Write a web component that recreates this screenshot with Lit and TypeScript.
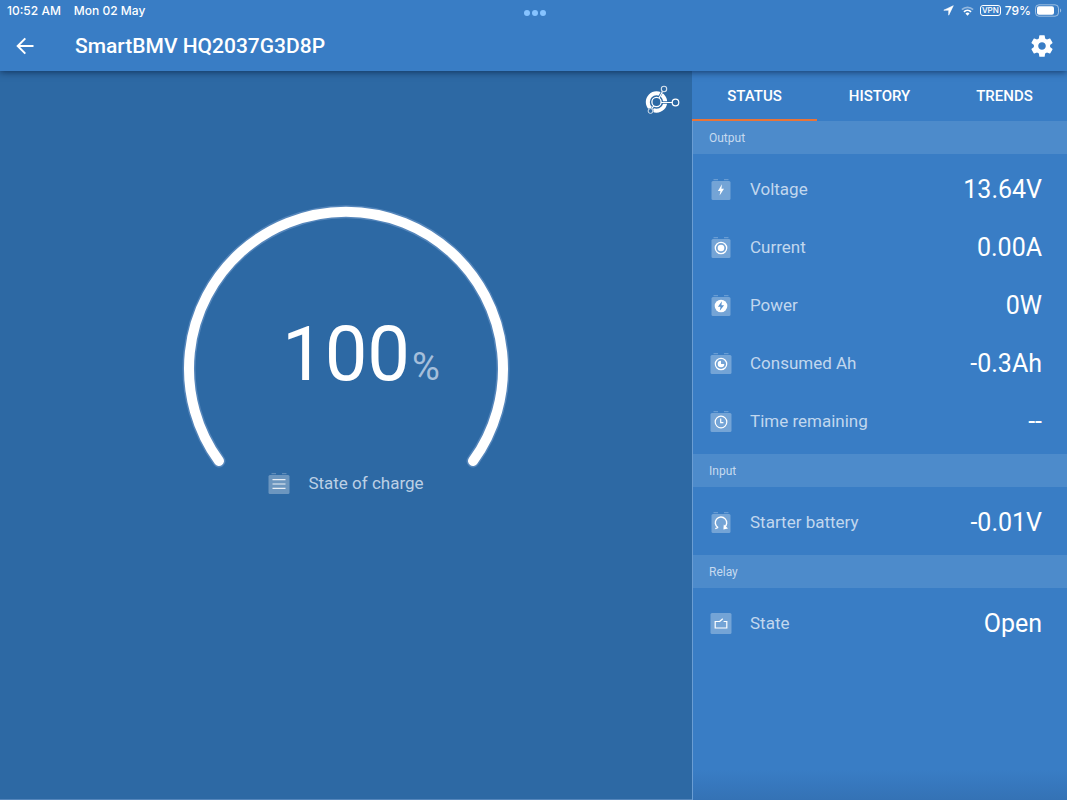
import { LitElement, html, svg, css, nothing, type SVGTemplateResult } from "lit";
import { customElement, property, state } from "lit/decorators.js";

type Glyph =
  | "voltage" | "current" | "power" | "consumed"
  | "time" | "starter" | "relay" | "charge";

interface Reading { icon: Glyph; label: string; value: string; }
interface Section { title: string; readings: Reading[]; }

const SECTIONS: Section[] = [
  {
    title: "Output",
    readings: [
      { icon: "voltage", label: "Voltage", value: "13.64V" },
      { icon: "current", label: "Current", value: "0.00A" },
      { icon: "power", label: "Power", value: "0W" },
      { icon: "consumed", label: "Consumed Ah", value: "-0.3Ah" },
      { icon: "time", label: "Time remaining", value: "--" },
    ],
  },
  { title: "Input", readings: [{ icon: "starter", label: "Starter battery", value: "-0.01V" }] },
  { title: "Relay", readings: [{ icon: "relay", label: "State", value: "Open" }] },
];

const GLYPHS: Record<Glyph, SVGTemplateResult> = {
  voltage: svg`<path fill="#fff" d="M12 6.2 7.9 13h2.5l-.8 4.6L14 10.8h-2.600z"/>`,
  current: svg`
    <circle cx="11" cy="12" r="5.700" fill="none" stroke="#fff" stroke-width="1.300"/>
    <circle cx="11" cy="12" r="3.300" fill="#fff"/>`,
  power: svg`
    <circle cx="11" cy="12" r="6.300" fill="#fff"/>
    <path fill="#5b93cf" d="M11.900 7.200 7.900 12.700h2.600l-.7 4.100 4.300-5.600h-2.700z"/>`,
  consumed: svg`
    <circle cx="11" cy="12" r="5.700" fill="none" stroke="#fff" stroke-width="1.200"/>
    <path fill="#fff" d="M11 8.700a3.300 3.300 0 1 0 3.300 3.300H11z"/>`,
  time: svg`
    <circle cx="11" cy="12" r="5.800" fill="none" stroke="#fff" stroke-width="1.200"/>
    <path fill="none" stroke="#fff" stroke-width="1.200" d="M10.700 8.500v4.100h2.700"/>`,
  starter: svg`
    <path fill="none" stroke="#fff" stroke-width="1.400" d="M8 16.600a5.700 5.700 0 1 1 6.300-.2"/>
    <path fill="none" stroke="#fff" stroke-width="1.200" d="M5.300 17.600 8.200 16.500"/>
    <path fill="#fff" d="m13.800 13.600 4.200 3.900-4.600.9z"/>`,
  relay: svg`<path fill="none" stroke="#fff" stroke-width="1.200" d="M9.500 9.500h-4.300v6.500h11.600v-6.500h-3.200M9.300 9.700l3.500-3"/>`,
  charge: svg`<path fill="none" stroke="#fff" stroke-opacity=".85" stroke-width="1.200" d="M4.500 7.600h13M4.500 12h13M4.500 16.400h13"/>`,
};

const WIDE: Glyph[] = ["consumed", "time", "charge"];

@customElement("battery-icon")
export class BatteryIcon extends LitElement {
  static styles = css`
    :host { display: block; flex: none; width: 22px; height: 22px; }
    .icon { display: block; width: 100%; height: 100%; }
  `;

  @property() glyph: Glyph = "voltage";

  render() {
    const relay = this.glyph === "relay";
    const wide = relay || WIDE.includes(this.glyph);
    return html`<svg class="icon" viewBox="0 0 22 22" aria-hidden="true">
      <rect
        x=${wide ? 0.5 : 1.5} y=${relay ? 1 : 3}
        width=${wide ? 21 : 19} height=${relay ? 21 : 19}
        rx="1.5" fill="#fff" fill-opacity=".3"
      />
      ${relay ? nothing : svg`<path fill="#fff" fill-opacity=".24" d="M3.500 1h4.500v1.200h-4.500zM14 1h4.500v1.200H14z"/>`}
      ${GLYPHS[this.glyph]}
    </svg>`;
  }
}

@customElement("charge-gauge")
export class ChargeGauge extends LitElement {
  static styles = css`
    :host { display: grid; width: min(328px, 80%); }
    .arc, .reading { grid-area: 1 / 1; }
    .arc { display: block; width: 100%; }
    .halo, .fill { fill: none; stroke-linecap: round; }
    .halo { stroke: #5586bb; stroke-width: 13; }
    .fill { stroke: #fff; stroke-width: 10; }
    .reading {
      display: grid;
      grid-template-columns: 1fr auto 1fr;
      align-items: baseline;
      align-self: center;
      padding-top: 48px;
      line-height: 90px;
    }
    .number { grid-column: 2; font-size: 76px; color: #fff; }
    .unit { font-size: 38px; color: #a5bfdb; padding-left: 2px; }
  `;

  @property({ type: Number }) value = 0;

  render() {
    const arc = "M37 257A157 157 0 1 1 291 257";
    return html`
      <svg class="arc" viewBox="0 0 328 264" aria-hidden="true">
        <path class="halo" d=${arc} />
        <path class="fill" d=${arc} pathLength="100" stroke-dasharray="${this.value} 100" />
      </svg>
      <div class="reading">
        <span class="number">${this.value}</span><span class="unit">%</span>
      </div>
    `;
  }
}

@customElement("app-root")
export class AppRoot extends LitElement {
  static styles = css`
    :host {
      display: flex;
      flex-direction: column;
      min-height: 100vh;
      font-family: Roboto, sans-serif;
      color: #fff;
      background: #397dc5;
    }
    * { box-sizing: border-box; }
    button { font: inherit; color: inherit; background: none; border: 0; padding: 0; margin: 0; cursor: pointer; }
    svg { display: block; }

    .top { position: relative; z-index: 1; background: #397dc5; box-shadow: 0 1px 7px rgba(0, 20, 50, 0.65); }
    .status {
      display: grid;
      grid-template-columns: 1fr auto 1fr;
      align-items: center;
      height: 21px;
      padding: 0 5px 0 7px;
      font: 500 12px/20px Inter, sans-serif;
    }
    .clock { display: flex; gap: 13px; }
    .dots { display: flex; gap: 2px; padding-top: 5px; }
    .dot { width: 6px; height: 6px; border-radius: 50%; background: #86c3ff; }
    .system { display: flex; justify-content: flex-end; align-items: center; gap: 4px; }
    .wifi { margin: 0 2px 0 3px; }
    .vpn {
      border: 1px solid #fff;
      border-radius: 3px;
      padding: 0 1px;
      font-size: 8px;
      line-height: 9px;
    }
    .bar { display: flex; align-items: center; height: 50px; padding: 0 12px 0 13px; }
    .title { flex: 1; margin: 0; padding-left: 38px; font-size: 21px; font-weight: 500; line-height: 28px; }

    .main { flex: 1; display: grid; grid-template-columns: minmax(0, 1fr) 375px; }
    .overview {
      display: flex;
      flex-direction: column;
      align-items: center;
      background: #2d69a4;
      border-bottom: 1px solid #5586bb;
      padding-top: 14px;
    }
    .network { align-self: flex-end; margin: 0 12px 87px 0; }
    .caption { display: flex; align-items: center; gap: 18px; margin-top: 4px; font-size: 17px; line-height: 22px; color: #bcd0e5; }

    .details { display: flex; flex-direction: column; background: linear-gradient(#397dc5 calc(100% - 30px), #3472b5); }
    .tabs { display: grid; grid-template-columns: repeat(3, 1fr); height: 50px; }
    .tab { font-size: 15px; font-weight: 500; padding-top: 1px; border-bottom: 2px solid transparent; }
    .tab.active { border-bottom-color: #ea7437; }
    .list { flex: 1; border-left: 1px solid #6a9dd3; }
    .heading { margin: 0; padding: 0 16px; font-size: 12px; font-weight: 400; line-height: 35px; height: 33px; color: #c6daef; background: #4d8bcb; }
    .rows { margin: 0; padding: 6px 0 4px; }
    .row { display: flex; align-items: center; height: 58px; padding: 0 25px 0 17px; gap: 18px; }
    .label { flex: 1; font-size: 17px; color: #c1d7ee; }
    .value { margin: 0; font-size: 25px; color: #fff; }
  `;

  @state() private tab = "STATUS";

  render() {
    return html`
      <header class="top">
        <div class="status">
          <div class="clock"><span>10:52 AM</span><span>Mon 02 May</span></div>
          <div class="dots"><i class="dot"></i><i class="dot"></i><i class="dot"></i></div>
          <div class="system">
            <svg width="11" height="11" viewBox="0 0 11 11"><path fill="#fff" stroke="#fff" stroke-width=".6" stroke-linejoin="round" d="M10.300.7.800 5.200h4.900v5z"/></svg>
            <svg class="wifi" width="13" height="10" viewBox="0 0 14 10" fill="none" stroke="#fff" stroke-width="1.900">
              <path stroke-opacity=".45" d="M1 3.500a8.500 8.500 0 0 1 12 0"/>
              <path d="M3.200 5.900a5.400 5.400 0 0 1 7.600 0"/>
              <path fill="#fff" stroke="none" d="M7 10 4.800 7.700a3.200 3.200 0 0 1 4.400 0z"/>
            </svg>
            <span class="vpn">VPN</span>
            <span>79%</span>
            <svg width="27" height="13" viewBox="0 0 27 13">
              <rect x=".5" y=".8" width="23" height="11.400" rx="3.500" fill="none" stroke="#fff" stroke-opacity=".5"/>
              <rect x="2" y="2.300" width="17" height="8.400" rx="2" fill="#fff"/>
              <path fill="#fff" fill-opacity=".5" d="M25 4.500c1.600.8 1.600 3.200 0 4z"/>
            </svg>
          </div>
        </div>
        <div class="bar">
          <button aria-label="Back">
            <svg width="24" height="24" viewBox="0 0 24 24"><path fill="none" stroke="#fff" stroke-width="2" d="M20.500 12H5.200M12.300 4.400 4.700 12l7.600 7.600"/></svg>
          </button>
          <h1 class="title">SmartBMV HQ2037G3D8P</h1>
          <button aria-label="Settings">
            <svg width="26" height="26" viewBox="0 0 24 24"><path fill="#fff" d="M19.430 12.980c.04-.32.07-.64.07-.98s-.03-.66-.07-.98l2.110-1.650c.19-.15.24-.42.12-.64l-2-3.460c-.12-.22-.39-.3-.61-.22l-2.490 1c-.52-.4-1.080-.73-1.690-.98l-.38-2.650C14.460 2.180 14.250 2 14 2h-4c-.25 0-.46.18-.49.42l-.38 2.650c-.61.25-1.170.59-1.690.98l-2.490-1c-.23-.09-.49 0-.61.22l-2 3.460c-.13.22-.07.49.12.64l2.110 1.650c-.04.32-.07.65-.07.98s.03.66.07.98l-2.110 1.650c-.19.15-.24.42-.12.64l2 3.460c.12.22.39.3.61.22l2.490-1c.52.4 1.080.73 1.690.98l.38 2.650c.03.24.24.42.49.42h4c.25 0 .46-.18.49-.42l.38-2.650c.61-.25 1.170-.59 1.690-.98l2.490 1c.23.09.49 0 .61-.22l2-3.460c.12-.22.07-.49-.12-.64l-2.110-1.650zM12 15.500c-1.930 0-3.500-1.570-3.500-3.500s1.570-3.500 3.500-3.500 3.500 1.570 3.500 3.500-1.570 3.500-3.500 3.500z"/></svg>
          </button>
        </div>
      </header>
      <main class="main">
        <section class="overview" aria-label="State of charge">
          <svg class="network" width="36" height="32" viewBox="0 0 36 32" fill="none">
            <circle cx="12.500" cy="17" r="8.700" stroke="#fff" stroke-width="4"/>
            <path stroke="#2d69a4" stroke-width="2.400" d="M15 12.500 18.500 6M17 17.500H29M10 21 7.500 24.500"/>
            <circle cx="20" cy="4" r="3.600" fill="#2d69a4"/>
            <circle cx="6.500" cy="26" r="3" fill="#2d69a4"/>
            <circle cx="12.500" cy="17" r="4.600" stroke="#fff" stroke-width="1.300"/>
            <path stroke="#fff" stroke-width="1.200" d="M15 13.200 18.600 6.300M17 17.500H28.500M9.700 20.700 7.800 23.800"/>
            <circle cx="20" cy="4" r="2.700" stroke="#d5e1ed" stroke-width="1.100"/>
            <circle cx="6.500" cy="26" r="2.400" stroke="#d5e1ed" stroke-width="1"/>
            <circle cx="31.500" cy="17.500" r="3.300" stroke="#fff" stroke-width="1.200"/>
          </svg>
          <charge-gauge .value=${100}></charge-gauge>
          <div class="caption"><battery-icon glyph="charge"></battery-icon><span>State of charge</span></div>
        </section>
        <section class="details">
          <div class="tabs" role="tablist">
            ${["STATUS", "HISTORY", "TRENDS"].map((name) => html`
              <button
                role="tab"
                class=${this.tab === name ? "tab active" : "tab"}
                aria-selected=${this.tab === name ? "true" : "false"}
                @click=${() => (this.tab = name)}
              >${name}</button>`)}
          </div>
          <div class="list">
            ${SECTIONS.map((section) => html`
              <h2 class="heading">${section.title}</h2>
              <dl class="rows">
                ${section.readings.map((r) => html`
                  <div class="row">
                    <battery-icon glyph=${r.icon}></battery-icon>
                    <dt class="label">${r.label}</dt>
                    <dd class="value">${r.value}</dd>
                  </div>`)}
              </dl>`)}
          </div>
        </section>
      </main>
    `;
  }
}
